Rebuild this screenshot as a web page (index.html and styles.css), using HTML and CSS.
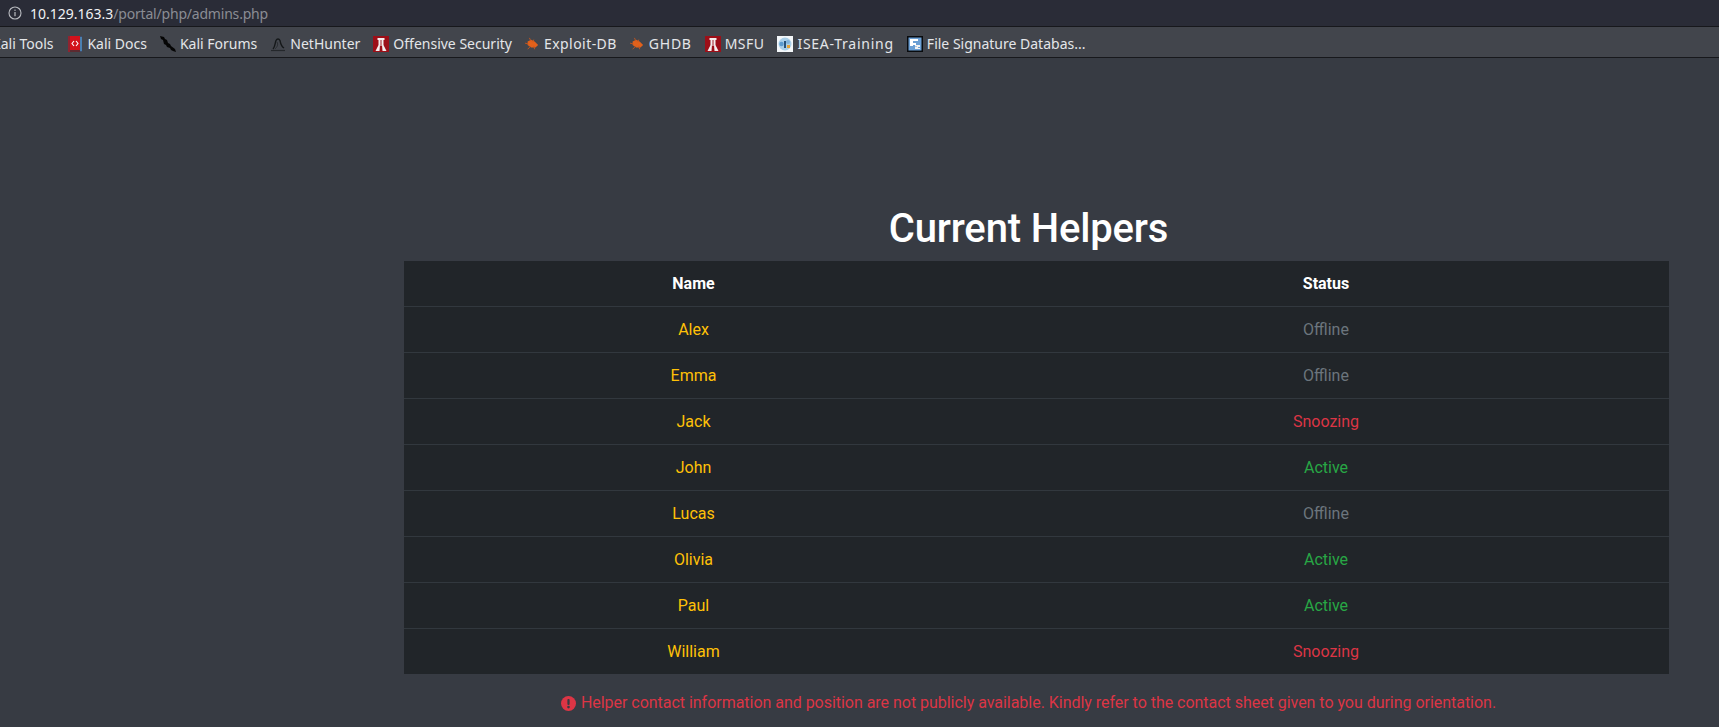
FILE: index.html
```html
<!DOCTYPE html>
<html lang="en">
<head>
<meta charset="utf-8">
<title>Current Helpers</title>
<link rel="stylesheet" href="styles.css">
</head>
<body>
<header class="chrome">
  <div class="urlbar">
    <svg class="info" viewBox="0 0 14 14" width="14" height="14"><circle cx="7" cy="7" r="6" fill="none" stroke="#b9bbc0" stroke-width="1.1"/><rect x="6.4" y="6" width="1.2" height="4.2" fill="#b9bbc0"/><rect x="6.4" y="3.6" width="1.2" height="1.3" fill="#b9bbc0"/></svg>
    <span class="host">10.129.163.3</span><span class="path">/portal/php/admins.php</span>
  </div>
  <nav class="bookmarks">
    <a class="bm bm-first">Kali Tools</a>
    <a class="bm"><svg class="ico" viewBox="0 0 16 16"><rect x="1" y="0" width="14" height="16" fill="#3f4c6b"/><rect x="3" y="0" width="10" height="14" fill="#d3121b"/><rect x="13" y="1" width="2" height="14" fill="#4a7fb0"/><rect x="1" y="0" width="2" height="16" fill="#8e2430"/><rect x="3" y="14" width="10" height="2" fill="#5c2a30"/><path d="M7 5 5 7.500 7 10M9 5 11 7.500 9 10" fill="none" stroke="#fff" stroke-width="1.100"/></svg>Kali Docs</a>
    <a class="bm"><svg class="ico" viewBox="0 0 16 16"><path d="M0 0 4 1 5 3 7 4 8 7 10 8 11 10 15 13 16 16 13 15 11 14 10 12 7 11 6 9 4 8 3 4 1 3Z" fill="#050505"/></svg>Kali Forums</a>
    <a class="bm"><svg class="ico" viewBox="0 0 16 16"><path d="M3 13C5 11 5 7 6 4.500 7 2.500 9 2.500 10 4.500 10.500 7 11 10 14 12" fill="none" stroke="#15181a" stroke-width="1.400"/><path d="M7 6C8.500 9 7 11 5 13" fill="none" stroke="#2a2d31" stroke-width="1"/><path d="M1 14.500H15" stroke="#24272b" stroke-width="1.200"/></svg>NetHunter</a>
    <a class="bm"><svg class="ico" viewBox="0 0 16 16"><rect width="16" height="16" fill="#9c0f18"/><path d="M4.500 2H11.500V4H10.500V9L13.500 15H9.500L9 9V4H7V9L6.500 15H2.500L5.500 9V4H4.500Z" fill="#f4eeee"/><rect x="7" y="4" width="2" height="6" fill="#c9868a"/></svg>Offensive Security</a>
    <a class="bm bm-wide"><svg class="ico ico-bug" viewBox="0 0 16 16"><path d="M3 5 7 3 11 5 15 9 12 12 7 12 3 9Z" fill="#e2611b"/><path d="M0 7 4 8M5 1 7 5M3 14 7 10M10 3 9 6M11 14 10 10" stroke="#c9561b" stroke-width="1"/></svg>Exploit-DB</a>
    <a class="bm bm-wider"><svg class="ico ico-bug" viewBox="0 0 16 16"><path d="M3 5 7 3 11 5 15 9 12 12 7 12 3 9Z" fill="#e2611b"/><path d="M0 7 4 8M5 1 7 5M3 14 7 10M10 3 9 6M11 14 10 10" stroke="#c9561b" stroke-width="1"/></svg>GHDB</a>
    <a class="bm bm-wide"><svg class="ico" viewBox="0 0 16 16"><rect width="16" height="16" fill="#9c0f18"/><path d="M4.500 2H11.500V4H10.500V9L13.500 15H9.500L9 9V4H7V9L6.500 15H2.500L5.500 9V4H4.500Z" fill="#f4eeee"/><rect x="7" y="4" width="2" height="6" fill="#c9868a"/></svg>MSFU</a>
    <a class="bm bm-wider"><svg class="ico" viewBox="0 0 16 16"><rect width="16" height="16" fill="#f4f7fa"/><circle cx="8" cy="8" r="6.500" fill="#a9cfe9"/><circle cx="4.500" cy="8" r="2.200" fill="#5b9bcf"/><circle cx="11" cy="6" r="2" fill="#7fb3dc"/><rect x="7" y="5" width="2" height="7" fill="#26527a"/><rect x="10" y="9" width="3" height="3" fill="#e0a23a"/></svg>ISEA-Training</a>
    <a class="bm"><svg class="ico" viewBox="0 0 16 16"><rect x=".75" y=".75" width="14.500" height="14.500" fill="#6b9fd4" stroke="#090b0e" stroke-width="1.500"/><path d="M3 3H11V5H6V7H9V9H6V10H3Z" fill="#fff"/><path d="M8 9H13V11H11V12H13V13H8V11H10V10.500H8Z" fill="#f1f1f1"/></svg>File Signature Databas...</a>
  </nav>
</header>
<main class="content">
  <h1 class="title">Current Helpers</h1>
  <table class="helpers">
    <colgroup><col class="col-name"><col class="col-status"></colgroup>
    <thead><tr><th>Name</th><th>Status</th></tr></thead>
    <tbody>
      <tr><td class="name">Alex</td><td class="offline">Offline</td></tr>
      <tr><td class="name">Emma</td><td class="offline">Offline</td></tr>
      <tr><td class="name">Jack</td><td class="snoozing">Snoozing</td></tr>
      <tr><td class="name">John</td><td class="active">Active</td></tr>
      <tr><td class="name">Lucas</td><td class="offline">Offline</td></tr>
      <tr><td class="name">Olivia</td><td class="active">Active</td></tr>
      <tr><td class="name">Paul</td><td class="active">Active</td></tr>
      <tr><td class="name">William</td><td class="snoozing">Snoozing</td></tr>
    </tbody>
  </table>
  <p class="notice"><svg class="alert" viewBox="0 0 16 16" width="15" height="15"><circle cx="8" cy="8" r="8" fill="#dc3545"/><rect x="6.800" y="3.200" width="2.400" height="6.300" rx="1" fill="#373b43"/><circle cx="8" cy="11.800" r="1.400" fill="#373b43"/></svg>Helper contact information and position are not publicly available. Kindly refer to the contact sheet given to you during orientation.</p>
</main>
</body>
</html>
```

FILE: styles.css
```css
* { box-sizing: border-box; }
html, body { margin: 0; height: 100%; overflow: hidden; }
body { background: #373b43; font-family: Roboto, "Liberation Sans", sans-serif; color: #fff; }

.chrome { font-family: "Noto Sans", "Open Sans", sans-serif; font-size: 14px; }
.urlbar { height: 27px; background: #2a2c37; border-bottom: 1px solid #17181c; display: flex; align-items: center; padding-left: 8px; }
.info { margin-right: 8px; flex: none; }
.host { color: #f1f2f4; }
.path { color: #8a8d94; letter-spacing: -0.2px; }
.bookmarks { height: 31px; background: #42454c; border-bottom: 1px solid #17181c; display: flex; align-items: center; gap: 13px; overflow: hidden; padding-top: 3px; }
.bm { display: flex; align-items: center; color: #e4e6e9; white-space: nowrap; flex: none; }
.bm-first { margin: 0 1px 0 -8px; }
.bm-wide { letter-spacing: 0.45px; }
.bm-wider { letter-spacing: 0.75px; }
.ico { width: 16px; height: 16px; margin-right: 4px; flex: none; }
.ico-bug { width: 14px; margin-right: 5px; }

.content { padding: 0 50px 0 404px; }
.title { margin: 0; height: 203px; display: flex; align-items: flex-end; justify-content: center; font-size: 40px; font-weight: 500; line-height: 48px; padding: 0 16px 8px 0; letter-spacing: -0.15px; }
.helpers { width: 100%; border-collapse: collapse; table-layout: fixed; background: #212529; font-size: 16px; text-align: center; }
.col-name { width: 579px; }
.helpers th, .helpers td { height: 46px; padding: 2px 12px 0; vertical-align: middle; border-top: 1px solid #32383e; line-height: 24px; }
.helpers thead th { border-top: 0; font-weight: 700; height: 45px; }
.name { color: #ffc107; }
.offline { color: #6c757d; }
.snoozing { color: #dc3545; }
.active { color: #28a745; }

.notice { margin: 17px 16px 0 0; color: #dc3545; display: flex; justify-content: center; align-items: center; font-size: 16px; line-height: 24px; letter-spacing: -0.03px; }
.alert { margin-right: 5px; flex: none; }
```
